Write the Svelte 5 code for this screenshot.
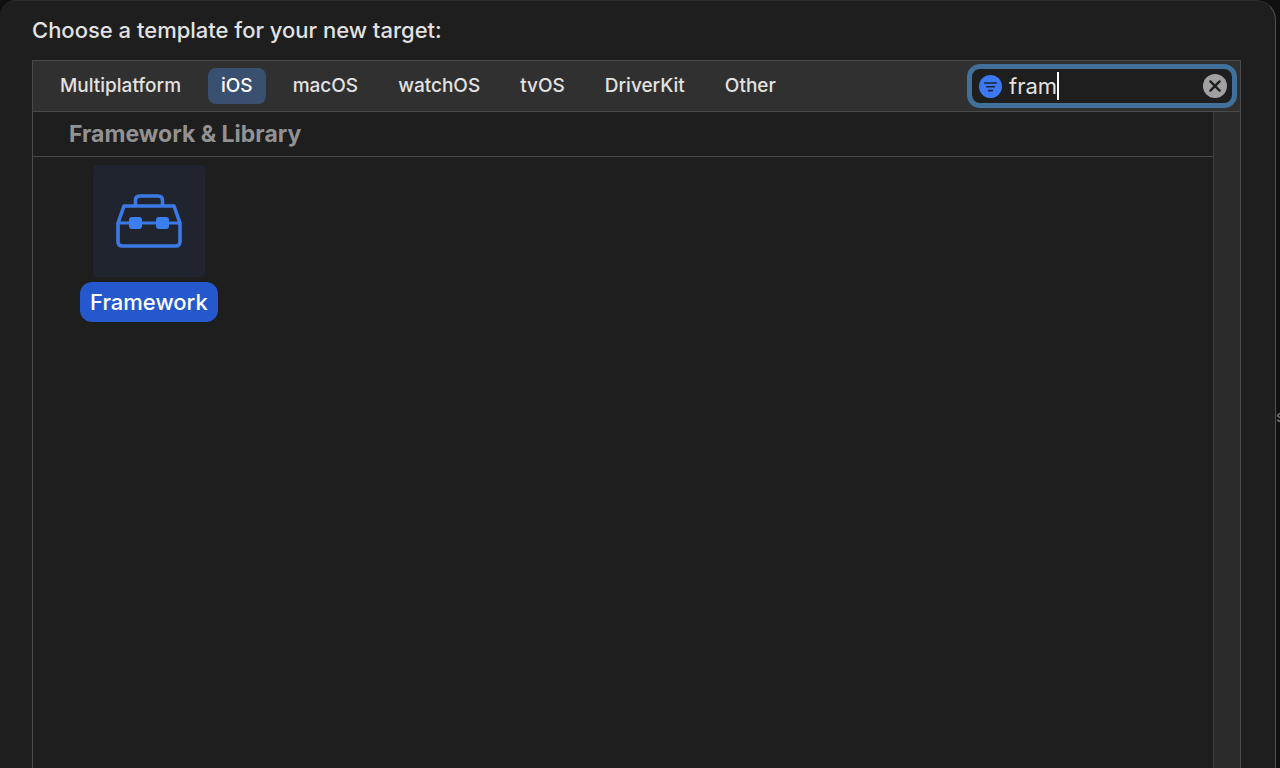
<script>
  const platforms = [
    "Multiplatform",
    "iOS",
    "macOS",
    "watchOS",
    "tvOS",
    "DriverKit",
    "Other"
  ];
  const templates = ["Framework"];

  let platform = $state("iOS");
  let selected = $state("Framework");
  let filter = $state("fram");

  const visible = $derived(
    templates.filter(name => name.toLowerCase().includes(filter.toLowerCase()))
  );
</script>

<div class="window">
  <main class="sheet">
    <h1>Choose a template for your new target:</h1>

    <div class="chooser">
      <div class="toolbar">
        <nav class="platforms">
          {#each platforms as name}
            <button
              class="platform"
              class:active={name === platform}
              onclick={() => (platform = name)}>{name}</button>
          {/each}
        </nav>

        <div class="search">
          <svg class="search-icon" viewBox="0 0 24 24" aria-hidden="true">
            <circle cx="12" cy="12" r="12" fill="#3b78f2" />
            <path
              d="M6 8.300h12M8 12.300h8M10 16.300h4"
              stroke="#1b2337"
              stroke-width="1.7"
              stroke-linecap="round" />
          </svg>
          <input type="text" aria-label="Filter" bind:value={filter} />
          <span class="caret"></span>
          <button class="clear" aria-label="Clear filter" onclick={() => (filter = "")}>
            <svg viewBox="0 0 24 24" aria-hidden="true">
              <circle cx="12" cy="12" r="12" fill="#a2a0a2" />
              <path
                d="M7.400 7.400l9.200 9.200M16.600 7.400l-9.200 9.200"
                stroke="#1e1e1e"
                stroke-width="2.4"
                stroke-linecap="round" />
            </svg>
          </button>
        </div>
      </div>

      <div class="content">
        <section class="list">
          <h2>Framework &amp; Library</h2>
          <div class="grid">
            {#each visible as name}
              <button
                class="template"
                class:selected={name === selected}
                onclick={() => (selected = name)}>
                <span class="tile">
                  <svg
                    viewBox="0 0 112 112"
                    fill="none"
                    stroke="#3b7ae6"
                    stroke-width="3.6"
                    stroke-linejoin="round"
                    aria-hidden="true">
                    <path d="M42.500 41v-5.500q0-4.500 4.500-4.500h18q4.500 0 4.500 4.500v5.500" />
                    <path d="M31 41h50l6 17v18.500q0 4.500-4.500 4.500h-53q-4.500 0-4.500-4.500V58z" />
                    <path d="M25 58h62" stroke-width="3" />
                    <rect x="36" y="52" width="13" height="12" rx="3" fill="#3b7ef0" stroke="none" />
                    <rect x="63" y="52" width="13" height="12" rx="3" fill="#3b7ef0" stroke="none" />
                  </svg>
                </span>
                <span class="label">{name}</span>
              </button>
            {/each}
          </div>
        </section>
        <div class="scroller"></div>
      </div>
    </div>
  </main>
  <div class="behind">s</div>
</div>

<style>
  :global(body) {
    background: #101010;
    overflow: hidden;
  }
  .window {
    display: flex;
    height: 100vh;
    font-family: Inter, "Liberation Sans", sans-serif;
    font-weight: 500;
    color: #e2e2e2;
  }
  .sheet {
    flex: 1;
    min-width: 0;
    box-sizing: border-box;
    display: flex;
    flex-direction: column;
    padding: 15px 34px 0 32px;
    background: #1e1e1e;
    border-top: 1px solid #2c2c2c;
    border-right: 1px solid #505050;
    border-radius: 16px 20px 0 0;
  }
  .behind {
    display: flex;
    align-items: center;
    width: 4px;
    padding-top: 64px;
    overflow: hidden;
    font-size: 16px;
    color: #707070;
  }
  h1 {
    margin: 0 0 16px;
    font-size: 22px;
    font-weight: 500;
    line-height: 28px;
  }
  .chooser {
    flex: 1;
    display: flex;
    flex-direction: column;
    border: 1px solid #4a4a4a;
    border-bottom: 0;
  }
  .toolbar {
    display: flex;
    align-items: center;
    justify-content: space-between;
    height: 50px;
    padding: 0 3px 0 14px;
    background: #303030;
    border-bottom: 1px solid #4a4a4a;
  }
  .platforms {
    display: flex;
    gap: 14px;
  }
  button {
    padding: 0;
    border: 0;
    background: none;
    font-family: inherit;
    font-weight: inherit;
    color: inherit;
  }
  .platform {
    height: 36px;
    padding: 0 13px;
    border-radius: 8px;
    font-size: 19px;
    line-height: 34px;
  }
  .platform.active {
    background: #3a5070;
    color: #fff;
  }
  .search {
    display: flex;
    align-items: center;
    box-sizing: border-box;
    width: 270px;
    height: 44px;
    padding: 0 5px 0 7px;
    background: #1e1e1e;
    border: 5px solid #41709b;
    border-radius: 13px;
  }
  .search-icon {
    width: 23px;
    height: 23px;
    margin-right: 7px;
  }
  input {
    field-sizing: content;
    max-width: 180px;
    padding: 0;
    border: 0;
    outline: 0;
    background: none;
    font-family: inherit;
    font-size: 22px;
    line-height: 28px;
    color: #e2e2e2;
    caret-color: transparent;
  }
  .caret {
    width: 2px;
    height: 28px;
    background: #fff;
  }
  .clear {
    width: 24px;
    height: 24px;
    margin-left: auto;
  }
  .clear svg,
  .tile svg {
    display: block;
  }
  .content {
    flex: 1;
    display: flex;
  }
  .list {
    flex: 1;
  }
  .scroller {
    width: 26px;
    background: #2b2b2b;
    border-left: 1px solid #404040;
  }
  h2 {
    margin: 0;
    padding: 0 36px;
    border-bottom: 1px solid #4a4a4a;
    font-size: 23px;
    font-weight: 700;
    line-height: 44px;
    color: #929292;
  }
  .grid {
    display: flex;
    padding: 8px 47px;
  }
  .template {
    display: flex;
    flex-direction: column;
    align-items: center;
    gap: 5px;
  }
  .tile {
    width: 112px;
    height: 112px;
    border-radius: 4px;
    background: #20242f;
  }
  .label {
    padding: 0 10px;
    border-radius: 12px;
    font-size: 22px;
    line-height: 40px;
  }
  .selected .label {
    background: #2458cc;
    color: #fff;
  }
</style>
